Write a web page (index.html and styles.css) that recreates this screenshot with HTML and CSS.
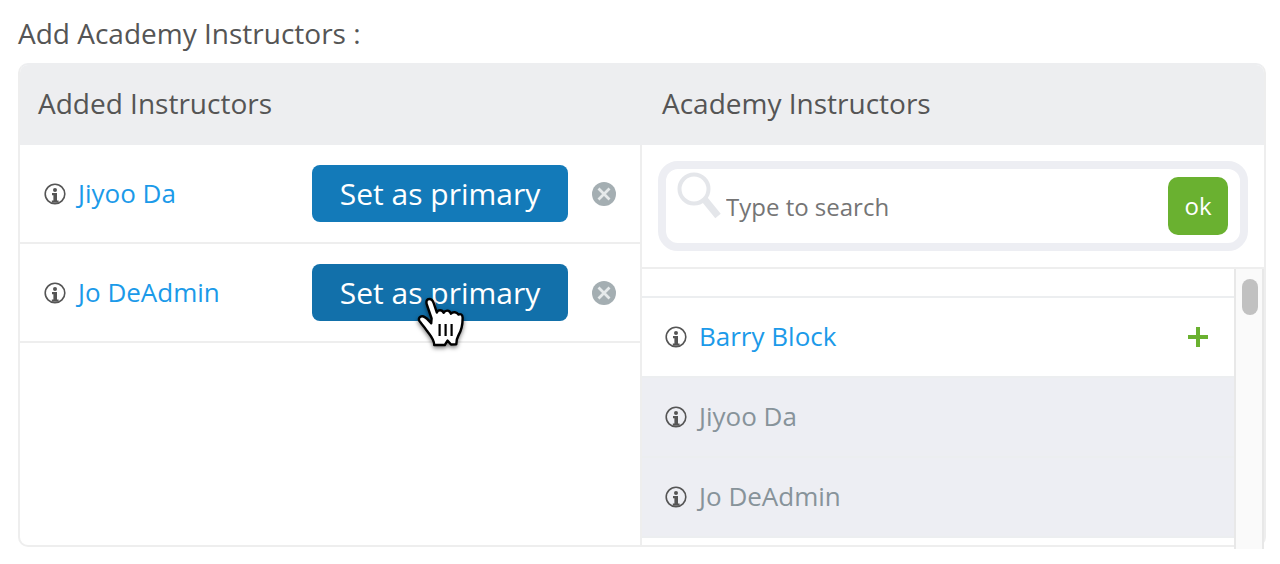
FILE: index.html
```html
<!DOCTYPE html>
<html lang="en">
<head>
    <meta charset="UTF-8">
    <meta name="viewport" content="width=device-width, initial-scale=1.0">
    <title>Academy Instructors</title>
    <link rel="stylesheet" href="styles.css">
</head>
<body>
    <!-- shared icons -->
    <svg class="sprite" aria-hidden="true">
        <symbol id="icon-info" viewBox="0 0 22 22">
            <circle cx="11" cy="11" r="9.8" fill="none" stroke="#555" stroke-width="1.6"/>
            <circle cx="11" cy="6.9" r="2" fill="#555"/>
            <path d="M8 10h5v7.5h1.6v2.2H7.8v-2.2h1.6v-5.3H8z" fill="#555"/>
        </symbol>
        <symbol id="icon-remove" viewBox="0 0 24 24">
            <circle cx="12" cy="12" r="12" fill="#a4aeb2"/>
            <path d="M6.5 6.5l11 11M17.5 6.5l-11 11" stroke="#e6eaeb" stroke-width="2.8"/>
        </symbol>
    </svg>

    <main class="page">
        <h1>Add Academy Instructors :</h1>
        <div class="panel">
            <section class="column">
                <h2>Added Instructors</h2>
                <ul class="added">
                    <li>
                        <svg class="info"><use href="#icon-info"/></svg>
                        <a class="name" href="#">Jiyoo Da</a>
                        <button class="primary" type="button">Set as primary</button>
                        <button class="remove" type="button" aria-label="Remove Jiyoo Da"><svg><use href="#icon-remove"/></svg></button>
                    </li>
                    <li>
                        <svg class="info"><use href="#icon-info"/></svg>
                        <a class="name" href="#">Jo DeAdmin</a>
                        <button class="primary hover" type="button">Set as primary
                            <svg class="pointer" viewBox="0 0 48 52">
                                <path d="M14.6 21.5 L9.8 7.5 C8.8 3.8 10 2 12.3 2 C14.6 2 15.8 3.3 16.8 6.3 L19.8 15.5 C21 12.6 25.2 12.4 26.6 15.8 C28.4 12.7 32.6 12.9 33.9 16.7 C36 14.3 39.8 15 41.5 17.6 C43.5 16.5 45.5 17.5 45.6 20.3 C45.8 28 44.5 33.5 41.4 38.5 C39.9 41 39.4 43.5 39.3 47.3 L34 47.5 L30.5 43.6 L27.8 48 L17.2 48 C17.3 42.5 13.3 38.5 10.3 34.3 C7.8 30.5 5.2 27.5 3 24.8 C0.3 21.3 3.2 18.6 6.5 19.5 C9.3 20.5 11.8 23.4 14.2 26.3 Z" fill="#fff" stroke="#000" stroke-width="2.4" stroke-linejoin="round"/>
                                <path d="M22.6 27v12M28.6 27v12M34.6 27v12" stroke="#000" stroke-width="2.2"/>
                            </svg>
                        </button>
                        <button class="remove" type="button" aria-label="Remove Jo DeAdmin"><svg><use href="#icon-remove"/></svg></button>
                    </li>
                </ul>
            </section>

            <section class="column">
                <h2>Academy Instructors</h2>
                <form class="search">
                    <div class="search-box">
                        <svg class="glass" viewBox="0 0 46 50">
                            <path d="M29 29L42 45" stroke="#e4e6ea" stroke-width="7"/>
                            <circle cx="18" cy="18" r="14.5" fill="none" stroke="#e4e6ea" stroke-width="4"/>
                        </svg>
                        <input type="text" placeholder="Type to search" aria-label="Type to search">
                        <button class="ok" type="submit">ok</button>
                    </div>
                </form>
                <div class="available">
                    <ul>
                        <li class="cut"></li>
                        <li>
                            <svg class="info"><use href="#icon-info"/></svg>
                            <a class="name" href="#">Barry Block</a>
                            <button class="add" type="button" aria-label="Add Barry Block">
                                <svg viewBox="0 0 20 20"><path d="M10 0v20M0 10h20" stroke="#6ab130" stroke-width="4"/></svg>
                            </button>
                        </li>
                        <li class="taken">
                            <svg class="info"><use href="#icon-info"/></svg>
                            <span class="name">Jiyoo Da</span>
                        </li>
                        <li class="taken">
                            <svg class="info"><use href="#icon-info"/></svg>
                            <span class="name">Jo DeAdmin</span>
                        </li>
                    </ul>
                    <div class="scrollbar"><div class="thumb"></div></div>
                </div>
            </section>
        </div>
    </main>
</body>
</html>
```
FILE: styles.css
```css
* {
    box-sizing: border-box;
}
body {
    margin: 0;
    background-color: #fff;
    color: #555;
    font-family: "Open Sans", "Noto Sans", sans-serif;
}
h1, h2 {
    margin: 0;
    font-size: 28px;
    font-weight: 400;
}
ul {
    list-style: none;
    margin: 0;
    padding: 0;
}
button {
    border: 0;
    padding: 0;
    background: none;
    font-family: inherit;
    cursor: pointer;
}
svg {
    display: block;
}
.sprite {
    position: absolute;
    width: 0;
    height: 0;
}
.page {
    padding: 14px 14px 16px 18px;
}
h1 {
    line-height: 38px;
    margin-bottom: 11px;
}

/* two-column panel */
.panel {
    display: grid;
    grid-template-columns: 1fr 1fr;
    border: 2px solid #eee;
    border-top-color: #edeef0;
    border-radius: 10px;
}
.column:first-child {
    border-right: 2px solid #eee;
}
h2 {
    height: 80px;
    padding: 0 20px;
    line-height: 76px;
    background-color: #edeef0;
}
.column:first-child h2 {
    padding-left: 18px;
    margin-right: -2px;
    border-top-left-radius: 8px;
}
.column:last-child h2 {
    border-top-right-radius: 8px;
}
.info {
    flex: none;
    width: 22px;
    height: 22px;
}
.name {
    flex: 1;
    margin-left: 12px;
    padding-bottom: 2px;
    font-size: 26px;
    line-height: 36px;
    color: #1b9ae9;
    text-decoration: none;
}

/* added instructors */
.added li {
    display: flex;
    align-items: center;
    padding: 20px 24px;
    border-bottom: 2px solid #eee;
}
.primary {
    position: relative;
    width: 256px;
    height: 57px;
    border-radius: 8px;
    background-color: #137ab9;
    color: #fff;
    font-size: 30px;
}
.primary.hover {
    background-color: #1270aa;
}
.pointer {
    position: absolute;
    left: 105px;
    top: 33px;
    width: 48px;
    height: 52px;
    filter: drop-shadow(0 2px 2px rgba(0, 0, 0, 0.5));
}
.remove {
    margin-left: 24px;
}
.remove svg {
    width: 24px;
    height: 24px;
}

/* search */
.search {
    padding: 16px;
    border-bottom: 2px solid #eee;
}
.search-box {
    display: flex;
    height: 90px;
    padding: 8px 12px 8px 10px;
    border: 8px solid #edeef3;
    border-radius: 20px;
}
.glass {
    flex: none;
    width: 46px;
    height: 50px;
    margin-top: -6px;
}
.search input {
    flex: 1;
    min-width: 0;
    padding: 0 4px;
    border: 0;
    outline: 0;
    background: none;
    color: #757575;
    font-family: inherit;
    font-size: 24px;
}
.search input::placeholder {
    color: #757575;
}
.ok {
    width: 60px;
    height: 58px;
    padding-bottom: 2px;
    border-radius: 10px;
    background-color: #6ab130;
    color: #fff;
    font-size: 24px;
}

/* available instructors, the list runs just past the panel edge */
.available {
    display: flex;
    height: 280px;
    margin-bottom: -4px;
}
.available ul {
    flex: 1;
}
.available li {
    display: flex;
    align-items: center;
    height: 80px;
    padding: 0 26px 0 23px;
    border-bottom: 2px solid #eceef0;
}
.available .cut {
    height: 29px;
}
.available .taken {
    background-color: #edeef3;
}
.taken .name {
    color: #87939a;
}
.add svg {
    width: 20px;
    height: 20px;
}
.scrollbar {
    width: 30px;
    padding: 10px 4px 0 6px;
    border: solid #e8e8e8;
    border-width: 0 2px;
    background-color: #fafafa;
}
.thumb {
    width: 16px;
    height: 36px;
    border-radius: 8px;
    background-color: #c1c1c1;
}
```
